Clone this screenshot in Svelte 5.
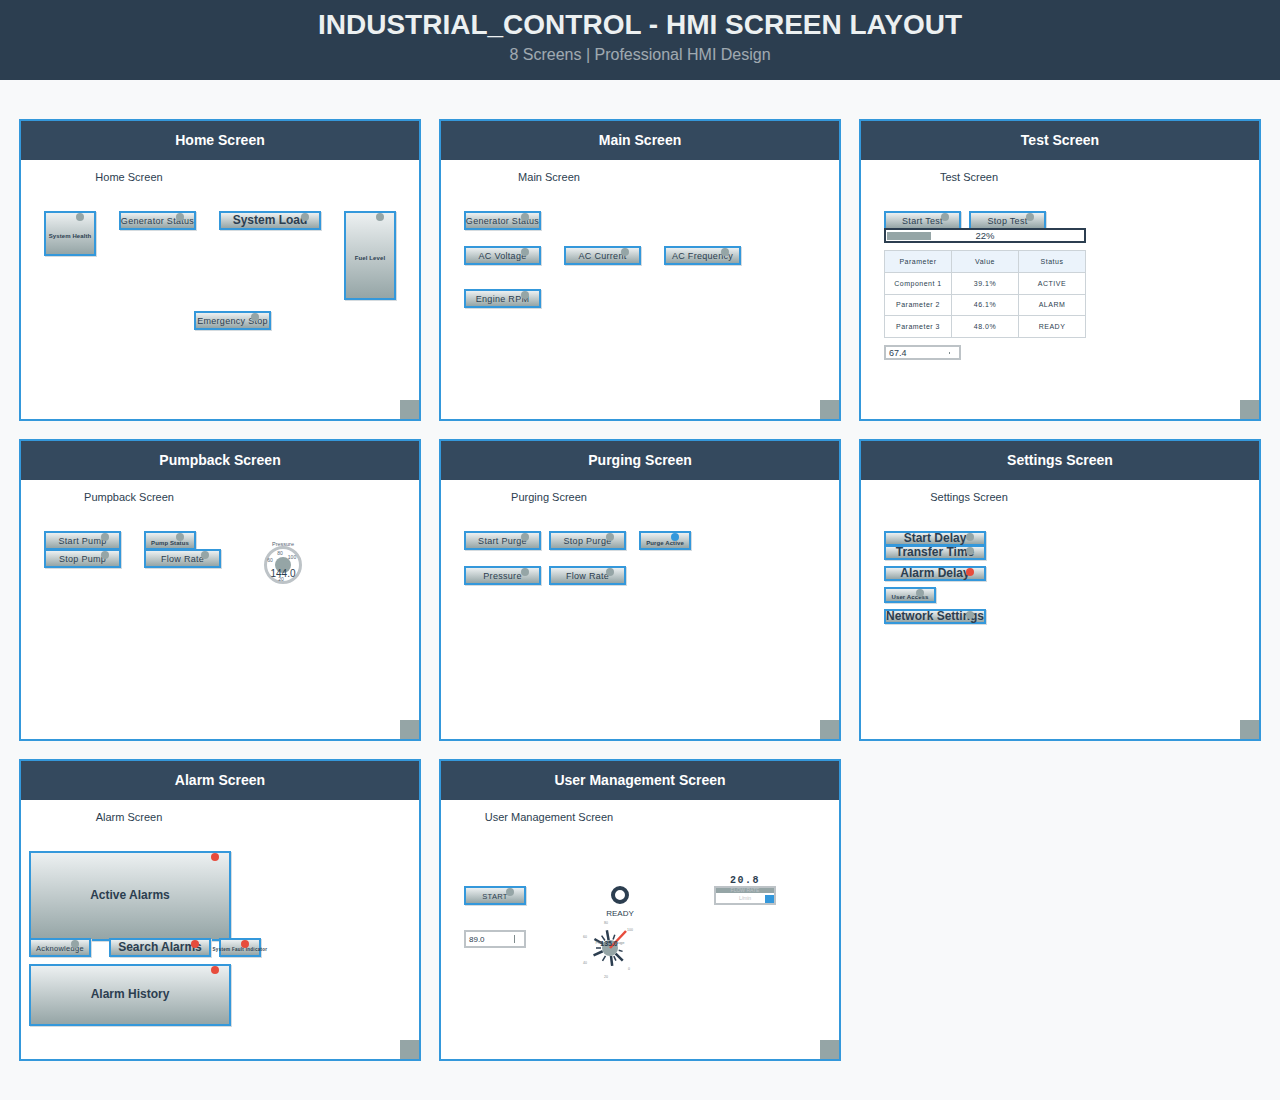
<script>
  // small sizes: s = 6px bold, m = 9px, l = 12px bold
  const btn = (label, x, y, w, h, size = "m", dot = "") => ({ label, x, y, w, h, size, dot });

  const screens = [
    {
      name: "Home Screen",
      widgets: [
        btn("System Health", 23, 90, 52, 45, "s"),
        btn("Generator Status", 98, 90, 77, 19),
        btn("System Load", 198, 90, 102, 19, "l"),
        btn("Fuel Level", 323, 90, 52, 89, "s"),
        btn("Emergency Stop", 173, 190, 77, 19)
      ]
    },
    {
      name: "Main Screen",
      widgets: [
        btn("Generator Status", 23, 90, 77, 19),
        btn("AC Voltage", 23, 125, 77, 19),
        btn("AC Current", 123, 125, 77, 19),
        btn("AC Frequency", 223, 125, 77, 19),
        btn("Engine RPM", 23, 168, 77, 19)
      ]
    },
    {
      name: "Test Screen",
      kind: "test",
      widgets: [btn("Start Test", 23, 90, 77, 19), btn("Stop Test", 108, 90, 77, 19)]
    },
    {
      name: "Pumpback Screen",
      kind: "pump",
      widgets: [
        btn("Start Pump", 23, 90, 77, 19),
        btn("Stop Pump", 23, 108, 77, 19),
        btn("Pump Status", 123, 90, 52, 19, "s"),
        btn("Flow Rate", 123, 108, 77, 19)
      ]
    },
    {
      name: "Purging Screen",
      widgets: [
        btn("Start Purge", 23, 90, 77, 19),
        btn("Stop Purge", 108, 90, 77, 19),
        btn("Purge Active", 198, 90, 52, 19, "s", "blue"),
        btn("Pressure", 23, 125, 77, 19),
        btn("Flow Rate", 108, 125, 77, 19)
      ]
    },
    {
      name: "Settings Screen",
      widgets: [
        btn("Start Delay", 23, 90, 102, 15, "l"),
        btn("Transfer Time", 23, 104, 102, 15, "l"),
        btn("Alarm Delay", 23, 125, 102, 15, "l", "red"),
        btn("User Access", 23, 146, 52, 16, "s"),
        btn("Network Settings", 23, 168, 102, 15, "l")
      ]
    },
    {
      name: "Alarm Screen",
      widgets: [
        btn("Active Alarms", 8, 90, 202, 90, "l", "red"),
        btn("Acknowledge", 8, 177, 62, 19, "sm"),
        btn("Search Alarms", 88, 177, 102, 19, "l", "red"),
        btn("System Fault Indicator", 198, 177, 42, 19, "xs", "red"),
        btn("Alarm History", 8, 203, 202, 62, "l", "red")
      ]
    },
    {
      name: "User Management Screen",
      kind: "user",
      widgets: [btn("START", 23, 125, 62, 19, "sm")]
    }
  ];

  const rows = [
    ["Parameter", "Value", "Status"],
    ["Component 1", "39.1%", "ACTIVE"],
    ["Parameter 2", "46.1%", "ALARM"],
    ["Parameter 3", "48.0%", "READY"]
  ];

  // angle from straight up, in degrees, with the tick's inner and outer radius
  const ticks = [
    [-10, 8, 18], [-34, 9, 15], [-60, 8, 18], [-90, 9, 14], [-114, 8, 18],
    [-150, 9, 15], [173, 8, 18], [155, 9, 14], [135, 8, 18], [105, 9, 13], [20, 9, 14]
  ];
  const point = (deg, r) => {
    const a = (deg * Math.PI) / 180;
    return { x: 30 + Math.sin(a) * r, y: 30 - Math.cos(a) * r };
  };
</script>

<div class="page">
  <header class="top">
    <h1>INDUSTRIAL_CONTROL - HMI SCREEN LAYOUT</h1>
    <p>8 Screens | Professional HMI Design</p>
  </header>

  <main class="grid">
    {#each screens as screen}
      <section class="card">
        <h2>{screen.name}</h2>
        <div class="caption">{screen.name}</div>

        {#each screen.widgets as w}
          <div
            class="widget {w.size}"
            style="left:{w.x}px;top:{w.y}px;width:{w.w}px;height:{w.h}px"
          >
            <span>{w.label}</span>
            <i class="dot {w.dot}"></i>
          </div>
        {/each}

        {#if screen.kind === "test"}
          <div class="progress">
            <div class="fill" style="width:{22}%"></div>
            <span>22%</span>
          </div>
          <div class="table">
            {#each rows as row, r}
              {#each row as cell}
                <div class="cell" class:head={r === 0}>{cell}</div>
              {/each}
            {/each}
          </div>
          <div class="input test-input"><span>67.4</span><i class="caret short"></i></div>
        {/if}

        {#if screen.kind === "pump"}
          <svg class="gauge-a" width="50" height="50" viewBox="0 0 50 50">
            <text x="25" y="7" class="g6">Pressure</text>
            <circle cx="25" cy="26" r="17.5" fill="#fff" stroke="#bdc3c7" stroke-width="3" />
            <text x="22" y="16" class="g5">80</text>
            <text x="34" y="20" class="g5">100</text>
            <text x="12" y="23" class="g5">60</text>
            <text x="23" y="42" class="g5">20</text>
            <circle cx="25" cy="26" r="8" fill="#95a5a6" />
            <text x="25" y="38" class="gv">144.0</text>
          </svg>
        {/if}

        {#if screen.kind === "user"}
          <div class="input user-input"><span>89.0</span><i class="caret"></i></div>
          <div class="ready">
            <i class="ring"></i>
            <span>READY</span>
          </div>
          <svg class="gauge-b" width="60" height="70" viewBox="0 0 60 70">
            <text x="26" y="5.5" class="g4">80</text>
            <text x="50" y="12.5" class="g4">100</text>
            <text x="5" y="19.5" class="g4">60</text>
            <text x="5" y="45.5" class="g4">40</text>
            <text x="49" y="51.5" class="g4">0</text>
            <text x="26" y="59.5" class="g4">20</text>
            {#each ticks as [deg, r1, r2]}
              <line
                x1={point(deg, r1).x}
                y1={point(deg, r1).y}
                x2={point(deg, r2).x}
                y2={point(deg, r2).y}
                stroke="#2c3e50"
                stroke-width={r2 === 18 ? 2.5 : 1.5}
              />
            {/each}
            <circle cx="30" cy="30" r="8" fill="#95a5a6" />
            <line x1="30" y1="30" x2="46" y2="13" stroke="#e74c3c" stroke-width="2.5" />
            <text x="30" y="26" class="g4 wide">Pressure Gauge</text>
            <text x="29" y="28" class="gs">135.0</text>
          </svg>
          <div class="flow">
            <b>20.8</b>
            <div class="flow-box">
              <div class="flow-head">FLOW RATE</div>
              <div class="flow-unit">L/min</div>
              <i></i>
            </div>
          </div>
        {/if}

        <div class="corner"></div>
      </section>
    {/each}
  </main>
</div>

<style>
  :global(body) {
    background: #f8f9fa;
  }

  .page {
    min-height: 1100px;
    font-family: "Liberation Sans", Arial, sans-serif;
    color: #2c3e50;
  }

  .top {
    height: 80px;
    background: #2c3e50;
    text-align: center;
    overflow: hidden;
  }
  .top h1 {
    margin: 8px 0 0;
    font-size: 28px;
    line-height: 34px;
    font-weight: 700;
    color: #ecf0f1;
  }
  .top p {
    margin: 3px 0 0;
    font-size: 16px;
    line-height: 20px;
    color: #ecf0f1;
    opacity: 0.6;
  }

  .grid {
    display: grid;
    grid-template-columns: repeat(3, 402px);
    grid-auto-rows: 302px;
    gap: 18px;
    padding: 39px 19px;
  }

  .card {
    position: relative;
    box-sizing: border-box;
    border: 2px solid #3498db;
    background: #fff;
  }
  .card h2 {
    margin: 0;
    height: 39px;
    background: #34495e;
    color: #fff;
    font-size: 14px;
    line-height: 39px;
    font-weight: 700;
    text-align: center;
  }
  .caption {
    width: 216px;
    margin-top: 10px;
    font-size: 11px;
    line-height: 14px;
    text-align: center;
  }
  .corner {
    position: absolute;
    right: 0;
    bottom: 0;
    width: 19px;
    height: 19px;
    background: #95a5a6;
  }

  .widget {
    position: absolute;
    box-sizing: border-box;
    display: flex;
    align-items: center;
    justify-content: center;
    border: 2px solid #3498db;
    background: linear-gradient(#ecf0f1, #95a5a6);
    box-shadow: 1px 1px 0 #d5dbdf;
    white-space: nowrap;
    font-size: 9px;
  }
  .widget span {
    position: relative;
    letter-spacing: 0.3px;
  }
  .widget.s {
    font-size: 6px;
    font-weight: 700;
  }
  .widget.s span {
    top: 2px;
    letter-spacing: 0.1px;
  }
  .widget.sm {
    font-size: 7.5px;
  }
  .widget.sm span {
    top: 1px;
  }
  .widget.xs {
    font-size: 4.5px;
    font-weight: 700;
  }
  .widget.xs span {
    top: 2px;
  }
  .widget.l {
    font-size: 12px;
    font-weight: 700;
  }
  .widget.l span {
    top: -1px;
    letter-spacing: 0;
  }
  .dot {
    position: absolute;
    top: 0;
    right: 10px;
    width: 8px;
    height: 8px;
    border-radius: 50%;
    background: #95a5a6;
  }
  .dot.red {
    background: #e74c3c;
  }
  .dot.blue {
    background: #3498db;
  }

  .progress {
    position: absolute;
    left: 23px;
    top: 107px;
    box-sizing: border-box;
    width: 202px;
    height: 15px;
    border: 2px solid #2c3e50;
    background: #fff;
    font-size: 9.5px;
    line-height: 11px;
    text-align: center;
  }
  .progress span {
    position: relative;
  }
  .fill {
    position: absolute;
    left: 1px;
    top: 2px;
    height: 8px;
    background: #95a5a6;
  }

  .table {
    position: absolute;
    left: 23px;
    top: 129px;
    box-sizing: border-box;
    width: 202px;
    height: 88px;
    display: grid;
    grid-template-columns: repeat(3, 1fr);
    grid-template-rows: repeat(4, 1fr);
    border-top: 1px solid #ccd3d8;
    border-left: 1px solid #ccd3d8;
  }
  .cell {
    display: flex;
    align-items: center;
    justify-content: center;
    border-right: 1px solid #ccd3d8;
    border-bottom: 1px solid #ccd3d8;
    font-size: 7px;
    letter-spacing: 0.5px;
  }
  .cell.head {
    background: #ebf3fb;
  }

  .input {
    position: absolute;
    box-sizing: border-box;
    display: flex;
    align-items: center;
    justify-content: space-between;
    padding: 0 9px 0 3px;
    border: 2px solid #bdc3c7;
    background: #fff;
    font-size: 9px;
  }
  .caret {
    width: 1px;
    height: 8px;
    background: #7f8c8d;
  }
  .caret.short {
    height: 2px;
  }
  .test-input {
    left: 23px;
    top: 224px;
    width: 77px;
    height: 15px;
  }
  .user-input {
    left: 23px;
    top: 169px;
    width: 62px;
    height: 18px;
    font-size: 8px;
  }

  .ready {
    position: absolute;
    left: 149px;
    top: 125px;
    width: 60px;
    display: flex;
    flex-direction: column;
    align-items: center;
    gap: 5px;
    font-size: 8px;
  }
  .ring {
    box-sizing: border-box;
    width: 18px;
    height: 18px;
    border: 4px solid #2c3e50;
    border-radius: 50%;
  }

  .gauge-a {
    position: absolute;
    left: 237px;
    top: 98px;
  }
  .gauge-b {
    position: absolute;
    left: 139px;
    top: 157px;
  }
  svg text {
    font-family: "Liberation Sans", Arial, sans-serif;
    text-anchor: middle;
    fill: #2c3e50;
  }
  .g6 {
    font-size: 5.5px;
    fill: #566573;
  }
  .g5 {
    font-size: 5px;
    fill: #566573;
  }
  .g4 {
    font-size: 3.5px;
    fill: #7f8c8d;
  }
  .wide {
    font-size: 4px;
  }
  .gv {
    font-size: 10px;
  }
  .gs {
    font-size: 7px;
    font-weight: 700;
  }

  .flow {
    position: absolute;
    left: 273px;
    top: 115px;
    width: 62px;
    text-align: center;
  }
  .flow b {
    display: block;
    font-family: "Liberation Mono", monospace;
    font-size: 10px;
    line-height: 10px;
    letter-spacing: 1.5px;
  }
  .flow-box {
    position: relative;
    box-sizing: border-box;
    height: 19px;
    border: 2px solid #bdc3c7;
    background: #fff;
  }
  .flow-head {
    height: 5px;
    background: #95a5a6;
    color: #bdc3c7;
    font-size: 5px;
    line-height: 5px;
  }
  .flow-unit {
    color: #bdc3c7;
    font-size: 5px;
    line-height: 10px;
  }
  .flow-box i {
    position: absolute;
    right: 0;
    bottom: 0;
    width: 9px;
    height: 8px;
    background: #3498db;
  }
</style>
